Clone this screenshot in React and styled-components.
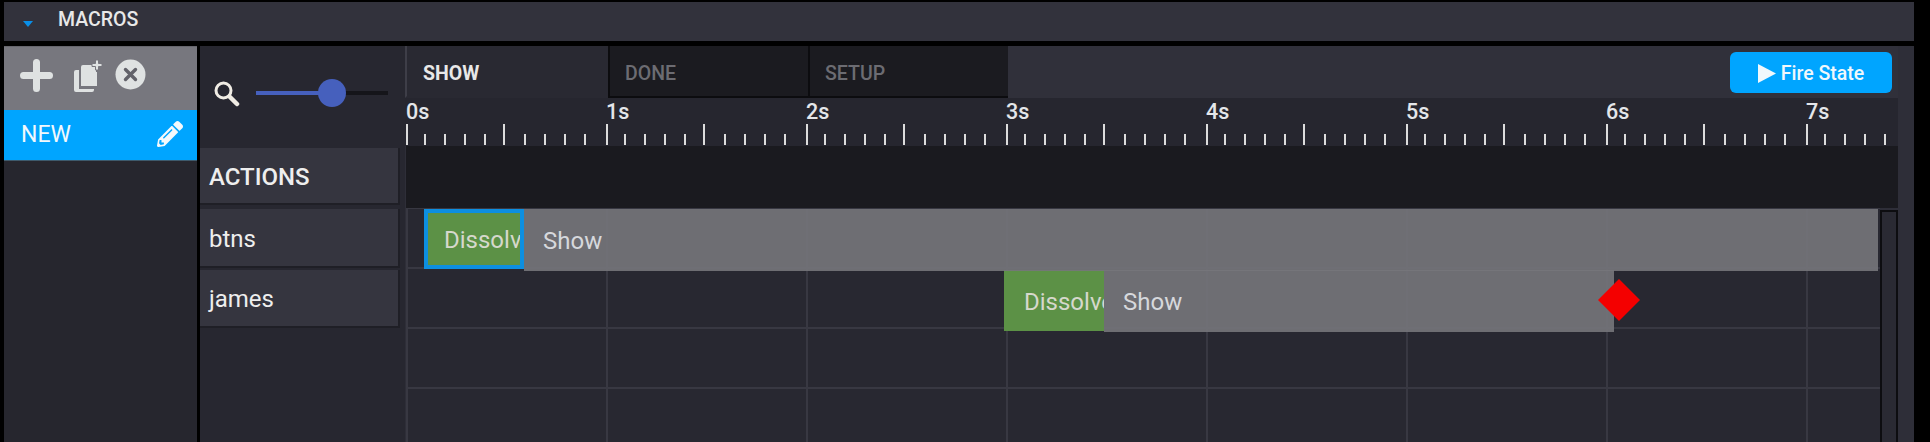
import React from 'react'
import styled, { createGlobalStyle } from 'styled-components'
import { FaPencilAlt } from 'react-icons/fa'

const GlobalStyle = createGlobalStyle`
    html, body {
        margin: 0;
        padding: 0;
        background: #000;
        overflow: hidden;
    }
    * {
        box-sizing: border-box;
    }
`

const Page = styled.div`
    width: 1930px;
    height: 442px;
    padding: 2px 16px 0 4px;
    display: flex;
    flex-direction: column;
    gap: 5px;
    font-family: Roboto, 'Liberation Sans', sans-serif;
    overflow: hidden;
`

// Top bar
const TopBar = styled.div`
    height: 39px;
    flex: none;
    background: #32323c;
    display: flex;
    align-items: center;
    padding-left: 19px;
`
const Caret = styled.div`
    width: 0;
    height: 0;
    border-left: 5px solid transparent;
    border-right: 5px solid transparent;
    border-top: 6px solid #0a8fe8;
    margin-top: 5px;
    margin-right: 25px;
`
const TopTitle = styled.span`
    font-size: 19.5px;
    font-weight: 500;
    color: #e8e8e8;
    margin-bottom: 4px;
`

const Body = styled.div`
    flex: 1;
    display: flex;
    gap: 3px;
    min-height: 0;
`

// Macro list
const Sidebar = styled.div`
    width: 193px;
    flex: none;
    background: #26262e;
    display: flex;
    flex-direction: column;
`
const SidebarTools = styled.div`
    height: 64px;
    background: #77777e;
    border-top: 1px solid #66666d;
    display: flex;
    align-items: center;
    padding: 0 0 6px 16px;
`
const ToolIcon = styled.svg`
    flex: none;
    margin-right: ${(props) => props.$gap}px;
    margin-bottom: ${(props) => props.$lift || 0}px;
    fill: #dfe2e2;
`
const MacroRow = styled.div`
    height: 51px;
    background: #00a5ff;
    border-bottom: 1px solid #3e5a6c;
    color: #f2f8fc;
    font-size: 23px;
    display: flex;
    align-items: center;
    justify-content: space-between;
    padding: 0 14px 2px 17px;
`

const Main = styled.div`
    flex: 1;
    min-width: 0;
    background: #2e2e38;
    display: flex;
`

// Channel labels column
const Labels = styled.div`
    width: 205px;
    flex: none;
    background: #272730;
    display: flex;
    flex-direction: column;
`
const ZoomRow = styled.div`
    height: 102px;
    display: flex;
    align-items: center;
    padding: 0 0 8px 13px;
`
const SliderTrack = styled.div`
    width: 132px;
    height: 4px;
    margin-left: 16px;
    background: #15151a;
    position: relative;
`
const SliderFill = styled.div`
    height: 100%;
    background: #4660bd;
`
const SliderThumb = styled.div`
    position: absolute;
    top: -12px;
    left: 62px;
    width: 28px;
    height: 28px;
    border-radius: 50%;
    background: #4660bd;
`
const LabelRow = styled.div`
    width: 200px;
    height: ${(props) => props.$height}px;
    margin-bottom: ${(props) => props.$gap}px;
    background: #35353f;
    border-bottom: 2px solid #1f1f26;
    border-right: 2px solid #1f1f26;
    color: #eeeeee;
    font-size: 24px;
    font-weight: ${(props) => (props.$heading ? 500 : 400)};
    display: flex;
    align-items: center;
    padding: 2px 0 0 9px;
`

// Timeline
const Timeline = styled.div`
    flex: 1;
    min-width: 0;
    display: flex;
    flex-direction: column;
    background: #2e2e38;
`
const TabBar = styled.div`
    height: 52px;
    flex: none;
    margin-right: 16px;
    background: #30303a;
    display: flex;
    align-items: stretch;
`
const Tab = styled.div`
    width: ${(props) => props.$width}px;
    flex: none;
    padding: 5px 0 0 ${(props) => (props.$active ? 16 : 15)}px;
    display: flex;
    align-items: center;
    font-size: 19.5px;
    font-weight: ${(props) => (props.$active ? 700 : 500)};
    color: ${(props) => (props.$active ? '#e8e8e8' : '#6c6c72')};
    background: ${(props) => (props.$active ? '#292932' : '#1b1b20')};
    border-left: 2px solid ${(props) => (props.$active ? '#3e3e48' : '#0c0c0f')};
    border-bottom: 2px solid ${(props) => (props.$active ? '#292932' : '#0c0c0f')};
`
const FireButton = styled.button`
    width: 162px;
    height: 41px;
    margin: 6px 6px 0 auto;
    border: 0;
    border-radius: 6px;
    background: #00a5ff;
    color: #f0f8fc;
    font-family: inherit;
    font-size: 19.5px;
    font-weight: 500;
    display: flex;
    align-items: center;
    justify-content: center;
    gap: 5px;
    padding: 2px 0 0;
`
const Ruler = styled.div`
    height: 48px;
    flex: none;
    margin-right: 16px;
    background: #26262f;
    display: flex;
    overflow: hidden;
    padding-left: 1px;
`
const RulerSecond = styled.div`
    width: 200px;
    flex: none;
    display: flex;
    flex-direction: column;
    justify-content: space-between;
    padding: 2px 0;
`
const RulerLabel = styled.span`
    font-size: 21.5px;
    font-weight: 500;
    line-height: 24px;
    color: #e4e6ea;
`
const TickRow = styled.div`
    display: flex;
    align-items: flex-end;
`
const Tick = styled.div`
    width: ${(props) => props.$width}px;
    height: ${(props) => (props.$long ? 21 : 11)}px;
    flex: none;
    background: linear-gradient(to right, #dcdcdc 2px, transparent 2px);
`
const ActionsBand = styled.div`
    height: 62px;
    flex: none;
    margin: 0 16px 0 1px;
    background: #1a1a1f;
`
const TrackArea = styled.div`
    flex: 1;
    display: flex;
    min-height: 0;
`
const TrackGrid = styled.div`
    width: 1474px;
    flex: none;
    margin-left: 1px;
    background-color: #282831;
    background-image:
        linear-gradient(to right, #383842 2px, transparent 2px),
        linear-gradient(to bottom, transparent 58px, #383842 58px, #383842 60px, transparent 60px);
    background-size: 200px 60px;
    background-position: 0 1px;
    padding-top: 1px;
`
const Track = styled.div`
    height: 61px;
    display: flex;
    align-items: flex-start;
    padding-left: ${(props) => props.$offset}px;
`
const DissolveClip = styled.div`
    width: ${(props) => props.$width}px;
    height: ${(props) => props.$height}px;
    flex: none;
    background: #5c9146;
    border: ${(props) => (props.$selected ? '4px solid #0d8fe0' : '0')};
    padding: 2px 0 0 ${(props) => (props.$selected ? 16 : 20)}px;
    color: #d6d8cc;
    font-size: 24px;
    display: flex;
    align-items: center;
    overflow: hidden;
    white-space: nowrap;
`
const ShowClip = styled.div`
    width: ${(props) => props.$width}px;
    height: 62px;
    flex: none;
    background: rgba(118, 118, 123, 0.9);
    padding: 1px 0 0 19px;
    color: #d6d8dc;
    font-size: 24px;
    display: flex;
    align-items: center;
    position: relative;
    z-index: 1;
`
const EndMarker = styled.div`
    position: absolute;
    top: 9px;
    right: -26px;
    width: 42px;
    height: 42px;
    background: #f40000;
    clip-path: polygon(50% 0, 100% 50%, 50% 100%, 0 50%);
`
const Scrollbar = styled.div`
    width: 18px;
    flex: none;
    margin-top: 2px;
    background: #2a2a33;
    border: 2px solid #0d0d10;
    border-bottom: 0;
`

const seconds = [0, 1, 2, 3, 4, 5, 6, 7]
const tickWidths = [18, 20, 20, 20, 19, 21, 20, 20, 20, 22]

const App = () => {
    return (
        <Page>
            <GlobalStyle />
            <TopBar>
                <Caret />
                <TopTitle>MACROS</TopTitle>
            </TopBar>
            <Body>
                <Sidebar>
                    <SidebarTools>
                        <ToolIcon $gap={20} width="33" height="33" viewBox="0 0 33 33">
                            <path d="M13 3.500a3.500 3.500 0 0 1 7 0V13h9.500a3.500 3.500 0 0 1 0 7H20v9.500a3.500 3.500 0 0 1-7 0V20H3.500a3.500 3.500 0 0 1 0-7H13z" />
                        </ToolIcon>
                        <ToolIcon $gap={12} width="30" height="33" viewBox="0 0 30 33">
                            <path d="M10 6h11l2 2v5h1v14H8V8a2 2 0 0 1 2-2z" />
                            <path d="M1 13a2 2 0 0 1 2-2h3v19h15v1a2 2 0 0 1-2 2H3a2 2 0 0 1-2-2z" />
                            <path d="M22.500 1h3v3.500H29v3h-3.500V11h-3V7.500H19v-3h3.500z" stroke="#77777e" strokeWidth="1" />
                        </ToolIcon>
                        <ToolIcon $gap={0} $lift={3} width="31" height="31" viewBox="0 0 31 31">
                            <circle cx="15.500" cy="15.500" r="15" />
                            <path d="M10.500 10.500l10 10M20.500 10.500l-10 10" stroke="#62626a" strokeWidth="3.400" strokeLinecap="round" />
                        </ToolIcon>
                    </SidebarTools>
                    <MacroRow>
                        NEW
                        <FaPencilAlt size={26} color="#f4f9fc" />
                    </MacroRow>
                </Sidebar>
                <Main>
                    <Labels>
                        <ZoomRow>
                            <svg width="27" height="27" viewBox="0 0 27 27" fill="none" stroke="#f0ece4">
                                <circle cx="10.500" cy="10.500" r="7.500" strokeWidth="3" />
                                <path d="M16.500 16.500L24 24" strokeWidth="4.500" strokeLinecap="round" />
                            </svg>
                            <SliderTrack>
                                <SliderFill style={{ width: '56%' }} />
                                <SliderThumb />
                            </SliderTrack>
                        </ZoomRow>
                        <LabelRow $heading $height={57} $gap={4}>ACTIONS</LabelRow>
                        <LabelRow $height={59} $gap={2}>btns</LabelRow>
                        <LabelRow $height={58} $gap={0}>james</LabelRow>
                    </Labels>
                    <Timeline>
                        <TabBar>
                            <Tab $active $width={203}>SHOW</Tab>
                            <Tab $width={200}>DONE</Tab>
                            <Tab $width={200}>SETUP</Tab>
                            <FireButton>
                                <svg width="18" height="19" viewBox="0 0 18 19">
                                    <path d="M0 0l18 9.500L0 19z" fill="#f0f8fc" />
                                </svg>
                                Fire State
                            </FireButton>
                        </TabBar>
                        <Ruler>
                            {seconds.map((s) => (
                                <RulerSecond key={s}>
                                    <RulerLabel>{s}s</RulerLabel>
                                    <TickRow>
                                        {tickWidths.map((w, t) => (
                                            <Tick key={t} $width={w} $long={t % 5 === 0} />
                                        ))}
                                    </TickRow>
                                </RulerSecond>
                            ))}
                        </Ruler>
                        <ActionsBand />
                        <TrackArea>
                            <TrackGrid>
                                <Track $offset={18}>
                                    <DissolveClip $selected $width={100} $height={60}>Dissolve</DissolveClip>
                                    <ShowClip $width={1354}>Show</ShowClip>
                                </Track>
                                <Track $offset={598}>
                                    <DissolveClip $width={100} $height={61}>Dissolve</DissolveClip>
                                    <ShowClip $width={510}>
                                        Show
                                        <EndMarker />
                                    </ShowClip>
                                </Track>
                            </TrackGrid>
                            <Scrollbar />
                        </TrackArea>
                    </Timeline>
                </Main>
            </Body>
        </Page>
    )
}

export default App
